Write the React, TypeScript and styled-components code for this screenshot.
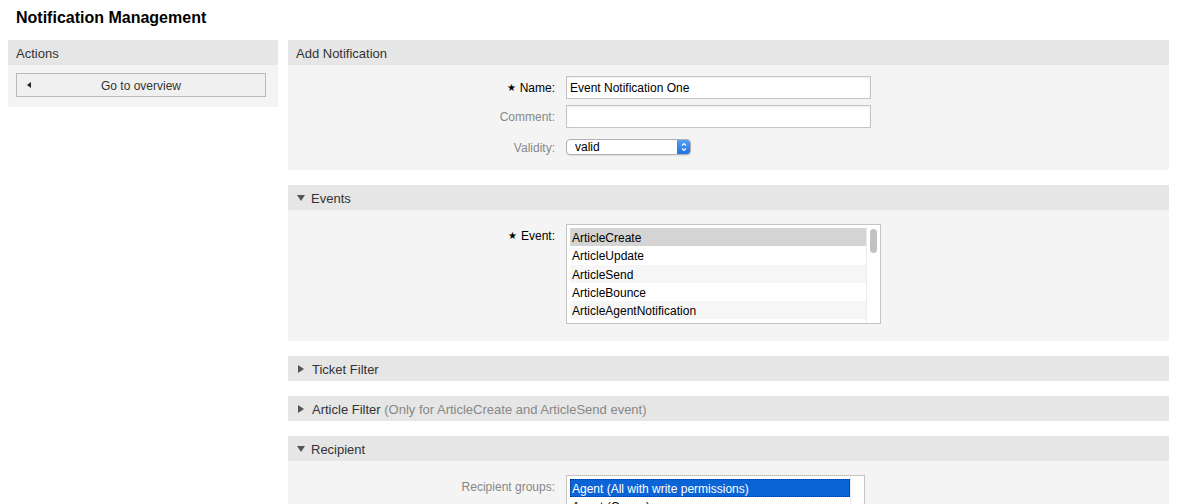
import React from "react";
import styled, { createGlobalStyle } from "styled-components";

const Global = createGlobalStyle`
  html, body { margin: 0; padding: 0; background: #fff; }
  body { font-family: "Liberation Sans", Arial, Helvetica, sans-serif; color: #000; }
  * { box-sizing: border-box; }
`;

const Page = styled.div`
  width: 1184px;
  height: 504px;
  overflow: hidden;
  padding: 0 15px 0 8px;
`;

const Title = styled.h1`
  margin: 0;
  height: 40px;
  padding: 9px 0 0 8px;
  font-size: 16px;
  line-height: 18px;
  font-weight: bold;
  color: #000;
`;

const Layout = styled.div`
  display: flex;
  gap: 10px;
  align-items: flex-start;
`;

const Sidebar = styled.div`
  width: 270px;
  flex: none;
`;

const Main = styled.div`
  flex: 1;
  display: flex;
  flex-direction: column;
  gap: 15px;
`;

const Widget = styled.section``;

const Header = styled.div`
  height: 25px;
  background: #e6e6e6;
  padding: 2px 0 0 8px;
  display: flex;
  align-items: center;
  gap: 6px;
  font-size: 13px;
  color: #333;
`;

const Muted = styled.span`
  color: #888;
`;

const Triangle = styled.span<{ $open?: boolean }>`
  width: 0;
  height: 0;
  display: inline-block;
  margin-left: 1px;
  ${(p) =>
    p.$open
      ? `border-left: 4.5px solid transparent; border-right: 4.5px solid transparent; border-top: 6px solid #555; margin-top: -1px;`
      : `border-top: 4.5px solid transparent; border-bottom: 4.5px solid transparent; border-left: 6px solid #555; margin-right: 2px; margin-left: 2px; margin-top: -2px;`}
`;

const Body = styled.div<{ $pt?: number; $pb?: number }>`
  background: #f4f4f4;
  padding: ${(p) => p.$pt ?? 8}px 8px ${(p) => p.$pb ?? 8}px 8px;
`;

const Button = styled.button`
  width: 250px;
  height: 24px;
  border: 1px solid #b8b8b8;
  background: #f0f0f0;
  display: flex;
  align-items: center;
  padding: 1px 0 0 10px;
  font-family: inherit;
  font-size: 12px;
  color: #333;
`;

const ButtonText = styled.span`
  flex: 1;
  text-align: center;
  padding-right: 14px;
`;

const LeftArrow = styled.span`
  width: 0;
  height: 0;
  margin-top: -1px;
  border-top: 3.5px solid transparent;
  border-bottom: 3.5px solid transparent;
  border-right: 4px solid #222;
`;

const Row = styled.div<{ $h?: number; $mb?: number; $align?: string }>`
  display: flex;
  align-items: ${(p) => p.$align ?? "center"};
  height: ${(p) => (p.$h ? `${p.$h}px` : "auto")};
  margin-bottom: ${(p) => p.$mb ?? 0}px;
`;

const Label = styled.label<{ $req?: boolean; $pt?: number }>`
  width: 259px;
  margin-right: 11px;
  text-align: right;
  font-size: 12px;
  color: ${(p) => (p.$req ? "#000" : "#888")};
  padding-top: ${(p) => p.$pt ?? 1}px;
`;

const Star = styled.span`
  font-size: 10px;
  margin-right: 4px;
  vertical-align: 1px;
`;

const Input = styled.div`
  width: 305px;
  height: 23px;
  border: 1px solid #c4c4c4;
  background: #fff;
  box-shadow: inset 0 1px 2px rgba(0, 0, 0, 0.08);
  font-size: 12px;
  line-height: 22px;
  padding-left: 3px;
  color: #000;
`;

const Select = styled.div`
  width: 125px;
  height: 16px;
  border: 1px solid #b0b0b0;
  border-radius: 4px;
  background: #fff;
  display: flex;
  align-items: center;
  font-size: 12px;
  overflow: hidden;
  box-shadow: 0 1px 1px rgba(0, 0, 0, 0.08);
`;

const SelectText = styled.span`
  flex: 1;
  padding-left: 8px;
  line-height: 14px;
`;

const Stepper = styled.span`
  width: 14px;
  height: 16px;
  margin: -1px -1px -1px 0;
  background: linear-gradient(#5aa3f5, #1a6fe3);
  border-radius: 0 4px 4px 0;
  display: flex;
  align-items: center;
  justify-content: center;
`;

const ListBox = styled.div<{ $w: number; $h: number }>`
  width: ${(p) => p.$w}px;
  height: ${(p) => p.$h}px;
  border: 1px solid #c4c4c4;
  background: #fff;
  display: flex;
  padding: 3px 0 0 3px;
  overflow: hidden;
`;

const ListItems = styled.div`
  flex: 1;
`;

const Item = styled.div<{ $sel?: boolean; $alt?: boolean; $focus?: boolean }>`
  height: 18.3px;
  line-height: 17px;
  padding: 2px 0 0 2px;
  font-size: 12px;
  white-space: nowrap;
  color: ${(p) => (p.$focus ? "#fff" : "#000")};
  background: ${(p) =>
    p.$focus ? "#0a64d6" : p.$sel ? "#d4d4d4" : p.$alt ? "#f6f6f6" : "#fff"};
  outline: ${(p) => (p.$focus ? "1px dotted #0a2f6a" : "none")};
  outline-offset: -1px;
`;

const Scroll = styled.div`
  width: 14px;
  flex: none;
  border-left: 1px solid #ececec;
  margin-top: -3px;
  padding: 4px 0 0 3px;
`;

const Thumb = styled.div`
  width: 7px;
  height: 24px;
  border-radius: 4px;
  background: #c2c2c2;
`;

const events = [
  "ArticleCreate",
  "ArticleUpdate",
  "ArticleSend",
  "ArticleBounce",
  "ArticleAgentNotification",
];

export default function App() {
  return (
    <Page>
      <Global />
      <Title>Notification Management</Title>
      <Layout>
        <Sidebar>
          <Widget>
            <Header>Actions</Header>
            <Body $pt={8} $pb={10}>
              <Button>
                <LeftArrow />
                <ButtonText>Go to overview</ButtonText>
              </Button>
            </Body>
          </Widget>
        </Sidebar>
        <Main>
          <Widget>
            <Header>Add Notification</Header>
            <Body $pt={11} $pb={12}>
              <Row $h={23} $mb={6}>
                <Label $req>
                  <Star>★</Star>Name:
                </Label>
                <Input>Event Notification One</Input>
              </Row>
              <Row $h={23} $mb={8}>
                <Label>Comment:</Label>
                <Input />
              </Row>
              <Row $h={22}>
                <Label>Validity:</Label>
                <Select>
                  <SelectText>valid</SelectText>
                  <Stepper>
                    <svg width="6" height="10" viewBox="0 0 6 10">
                      <path d="M1 3.5 L3 1.5 L5 3.5 M1 6.5 L3 8.5 L5 6.5" stroke="#fff" strokeWidth="1.1" fill="none" />
                    </svg>
                  </Stepper>
                </Select>
              </Row>
            </Body>
          </Widget>

          <Widget>
            <Header>
              <Triangle $open />
              Events
            </Header>
            <Body $pt={14} $pb={17}>
              <Row $align="flex-start">
                <Label $req $pt={5}>
                  <Star>★</Star>Event:
                </Label>
                <ListBox $w={315} $h={100}>
                  <ListItems>
                    {events.map((e, i) => (
                      <Item key={e} $sel={i === 0} $alt={i % 2 === 0}>
                        {e}
                      </Item>
                    ))}
                  </ListItems>
                  <Scroll>
                    <Thumb />
                  </Scroll>
                </ListBox>
              </Row>
            </Body>
          </Widget>

          <Widget>
            <Header>
              <Triangle />
              Ticket Filter
            </Header>
          </Widget>

          <Widget>
            <Header>
              <Triangle />
              <span>
                Article Filter <Muted>(Only for ArticleCreate and ArticleSend event)</Muted>
              </span>
            </Header>
          </Widget>

          <Widget>
            <Header>
              <Triangle $open />
              Recipient
            </Header>
            <Body $pt={14} $pb={40}>
              <Row $align="flex-start">
                <Label $pt={5}>Recipient groups:</Label>
                <ListBox $w={299} $h={100}>
                  <ListItems>
                    <Item $focus>Agent (All with write permissions)</Item>
                    <Item>Agent (Owner)</Item>
                    <Item $alt>Agent (Responsible)</Item>
                  </ListItems>
                  <Scroll />
                </ListBox>
              </Row>
            </Body>
          </Widget>
        </Main>
      </Layout>
    </Page>
  );
}
